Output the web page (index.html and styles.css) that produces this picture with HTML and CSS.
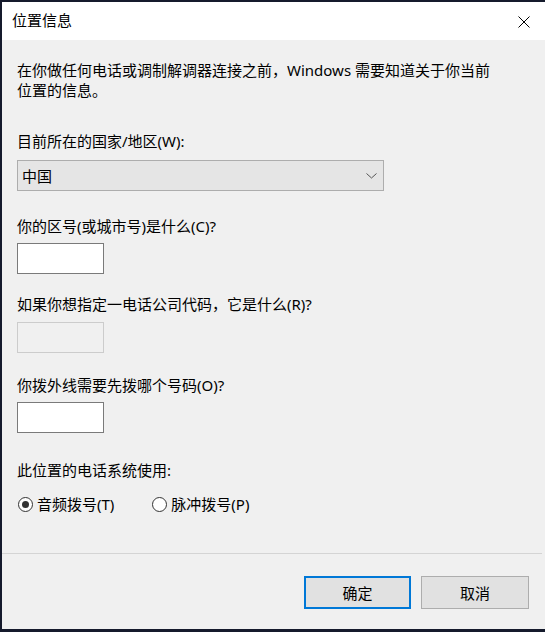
FILE: index.html
```html
<!DOCTYPE html>
<html lang="zh-CN">
<head>
<meta charset="utf-8">
<title>位置信息</title>
<link rel="stylesheet" href="styles.css">
</head>
<body>
<div class="window">
  <div class="titlebar">
    <span class="title">位置信息</span>
    <span class="close" aria-label="关闭">
      <svg width="12" height="12" viewBox="0 0 12 12"><path d="M0.5 0.5 L11.5 11.5 M11.5 0.5 L0.5 11.5" stroke="#000" stroke-width="1"/></svg>
    </span>
  </div>
  <div class="content">
    <p class="intro">在你做任何电话或调制解调器连接之前，Windows 需要知道关于你当前<br>位置的信息。</p>
    <div class="label l1">目前所在的国家/地区(W):</div>
    <div class="combo">
      <span>中国</span>
      <svg class="chev" width="11" height="6" viewBox="0 0 11 6"><path d="M0.5 0.5 L5.5 5 L10.5 0.5" fill="none" stroke="#555" stroke-width="1"/></svg>
    </div>
    <div class="label l2">你的区号(或城市号)是什么(C)?</div>
    <div class="field"></div>
    <div class="label l3">如果你想指定一电话公司代码，它是什么(R)?</div>
    <div class="field disabled"></div>
    <div class="label l4">你拨外线需要先拨哪个号码(O)?</div>
    <div class="field"></div>
    <div class="label l5">此位置的电话系统使用:</div>
    <div class="radios">
      <label class="radio"><span class="dot checked"></span>音频拨号(T)</label>
      <label class="radio r2"><span class="dot"></span>脉冲拨号(P)</label>
    </div>
  </div>
  <div class="footer">
    <div class="btn default">确定</div>
    <div class="btn">取消</div>
  </div>
</div>
</body>
</html>
```

FILE: styles.css
```css
html, body {
  margin: 0;
  padding: 0;
}
body {
  background: #151a2c;
  padding: 2px 0 3px 2px;
  font-family: "Noto Sans", "Noto Sans CJK SC", sans-serif;
  font-size: 15px;
  color: #000;
  width: 543px;
  height: 627px;
}
.window {
  width: 543px;
  height: 627px;
  background: #f0f0f0;
  display: flex;
  flex-direction: column;
}
.titlebar {
  height: 38px;
  background: #fff;
  display: flex;
  align-items: center;
  justify-content: space-between;
  padding: 0 15px 0 10px;
}
.title {
  font-size: 15px;
  line-height: 20px;
  margin-top: -2px;
}
.close {
  display: flex;
  margin-top: 1px;
}
.content {
  display: flex;
  flex-direction: column;
  align-items: flex-start;
  padding: 0 0 0 15px;
  height: 513px;
  border-bottom: 1px solid #d4d4d4;
  margin-right: 3px;
}
.intro {
  margin: 20px 0 0 0;
  line-height: 20px;
}
.label {
  line-height: 20px;
}
.l1 { margin-top: 31px; }
.l2 { margin-top: 25px; }
.l3 { margin-top: 20px; }
.l4 { margin-top: 22px; }
.l5 { margin-top: 27px; }
.combo {
  margin-top: 9px;
  height: 29px;
  background: #e5e5e5;
  border: 1px solid #adadad;
  display: flex;
  align-items: center;
  justify-content: space-between;
  padding: 0 5px 0 4px;
  box-sizing: content-box;
  width: 356px;
}
.combo span { line-height: 20px; }
.chev { margin-right: 1px; }
.field {
  margin-top: 7px;
  width: 85px;
  height: 29px;
  background: #fff;
  border: 1px solid #7a7a7a;
}
.field.disabled {
  margin-top: 8px;
  background: #f0f0f0;
  border-color: #cccccc;
}
.radios {
  display: flex;
  margin-top: 14px;
  line-height: 20px;
}
.radio {
  display: flex;
  align-items: center;
}
.r2 { margin-left: 37px; }
.dot {
  width: 13px;
  height: 13px;
  border: 1px solid #333;
  border-radius: 50%;
  background: #fff;
  margin: 0 4px 0 1px;
  display: flex;
  align-items: center;
  justify-content: center;
}
.dot.checked::after {
  content: "";
  width: 7px;
  height: 7px;
  border-radius: 50%;
  background: #333;
}
.footer {
  display: flex;
  justify-content: flex-end;
  gap: 10px;
  padding: 22px 16px 0 0;
}
.btn {
  width: 106px;
  height: 31px;
  background: #e1e1e1;
  border: 1px solid #adadad;
  display: flex;
  align-items: center;
  justify-content: center;
  line-height: 20px;
}
.btn.default {
  border: 2px solid #0078d7;
  width: 103px;
  height: 29px;
}
```
